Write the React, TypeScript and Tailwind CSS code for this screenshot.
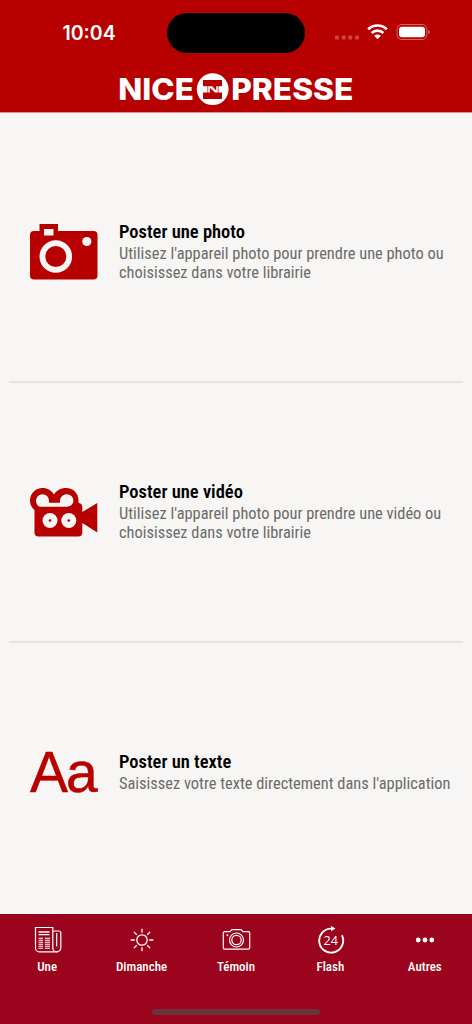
import type { ReactNode } from 'react'

interface PostOption {
  id: string
  title: string
  lines: string[]
  icon: ReactNode
}

interface Tab {
  label: string
  icon: ReactNode
}

const CameraIcon = () => (
  <svg width="68" height="56" viewBox="0 0 68 56" fill="none">
    <path
      fill="#b70000"
      fillRule="evenodd"
      d="M4 7H9.5V0H28V7H63.5a4 4 0 0 1 4 4V51.5a4 4 0 0 1-4 4H4a4 4 0 0 1-4-4V11a4 4 0 0 1 4-4ZM14 5V11.5H23.5V5Z"
    />
    <circle cx="25.8" cy="32.5" r="13.4" stroke="#f7f6f4" strokeWidth="5.8" />
    <circle cx="56.8" cy="17.5" r="4.6" fill="#f7f6f4" />
  </svg>
)

const MovieIcon = () => (
  <svg width="68" height="49" viewBox="0 0 68 49">
    <path
      fill="#b70000"
      d="M12.5 0C17.5 0 21.5 2.5 24 6.5C26.5 2.5 30.5 0 36 0C43.5 0 48.5 5.5 48.5 12.5V15C50.5 15 52.3 16.5 52.3 19V24L67.3 15V44.5L52.3 35V44.5a4 4 0 0 1-4 4H8.5a4 4 0 0 1-4-4V22C1.5 19.5 0 16.5 0 12.5C0 5.5 5.5 0 12.5 0Z"
    />
    <path
      fill="#f7f6f4"
      d="M12.5 6.2A6.5 6.5 0 0 0 6 12.6C6 15.5 7.3 17.6 9.6 18.8H37C41 18.5 43.4 16 43.4 12.6A6.5 6.5 0 0 0 36.8 6.2A6.5 6.5 0 0 0 30 12.6V14.8H19V12.6A6.5 6.5 0 0 0 12.5 6.2Z"
    />
    <circle cx="20" cy="32.5" r="7.5" fill="#f7f6f4" />
    <circle cx="38.8" cy="32.5" r="7.5" fill="#f7f6f4" />
    <circle cx="20" cy="32.5" r="1.3" fill="#b70000" />
    <circle cx="38.8" cy="32.5" r="1.3" fill="#b70000" />
  </svg>
)

const NewspaperIcon = () => (
  <svg className="ml-px" width="28" height="28" viewBox="0 0 28 28" fill="none" stroke="#fff" strokeWidth="1.2">
    <path d="M18.8 22.5V1.5H1.5V22a3.8 3.8 0 0 0 3.8 3.8H23a3.8 3.8 0 0 0 3.8-3.8V7a2 2 0 0 0-2-2H20.5a1.7 1.7 0 0 0-1.7 1.7" />
    <path d="M18.8 22a3.8 3.8 0 0 0 3.8 3.8M22.7 7V20.5" />
    <path d="M4.5 6H15.5M4.5 8.6H15.5" strokeWidth="1.3" />
    <path
      d="M4.5 12.2H9M4.5 14.2H9M4.5 16.2H9M4.5 18.2H9M4.5 20.2H9M4.5 22.2H9M10.8 12.2H16M10.8 14.2H16M10.8 16.2H16M10.8 18.2H16M10.8 20.2H16M10.8 22.2H16"
      strokeWidth="1.1"
    />
  </svg>
)

const SunIcon = () => (
  <svg className="ml-px" width="24" height="24" viewBox="0 0 24 24" fill="none" stroke="#fff" strokeWidth="1.3">
    <circle cx="12" cy="12" r="5.2" />
    <path d="M12 .7V4.8M12 19.2V23.3M.7 12H4.8M19.2 12H23.3M3.9 3.9L6.8 6.8M17.2 17.2L20.1 20.1M3.9 20.1L6.8 17.2M17.2 6.8L20.1 3.9" />
  </svg>
)

const PhotoTabIcon = () => (
  <svg width="30" height="24" viewBox="0 0 30 24" fill="none" stroke="#fff" strokeWidth="1.2">
    <path d="M3.5 3.7H9L11 1.7H20L22 3.7H27.5a1.2 1.2 0 0 1 1.2 1.2V20a1.2 1.2 0 0 1-1.2 1.2H3.5A1.2 1.2 0 0 1 2.3 20V4.9A1.2 1.2 0 0 1 3.5 3.7Z" />
    <circle cx="15.5" cy="12" r="7" />
    <circle cx="15.5" cy="12" r="4.7" />
    <circle cx="6.4" cy="7.3" r="1" fill="#fff" stroke="none" />
  </svg>
)

const FlashIcon = () => (
  <svg className="ml-[2px]" width="28" height="28" viewBox="0 0 28 28" fill="none">
    <path d="M15.5 2.6H14A12 12 0 1 0 24.9 9.2" stroke="#fff" strokeWidth="1.9" />
    <path d="M14 0L18.5 2.6L14 5.3Z" fill="#fff" />
    <text
      className="[font-stretch:100%]"
      x="13.8"
      y="18.9"
      textAnchor="middle"
      fill="#fff"
      fontSize="12.6"
      fontFamily="Open Sans, sans-serif"
    >
      24
    </text>
  </svg>
)

const DotsIcon = () => (
  <svg width="20" height="6" viewBox="0 0 20 6" fill="#fff">
    <circle cx="3.2" cy="3" r="2.4" />
    <circle cx="10" cy="3" r="2.4" />
    <circle cx="16.8" cy="3" r="2.4" />
  </svg>
)

const options: PostOption[] = [
  {
    id: 'photo',
    title: 'Poster une photo',
    lines: ["Utilisez l'appareil photo pour prendre une photo ou", 'choisissez dans votre librairie'],
    icon: <CameraIcon />,
  },
  {
    id: 'video',
    title: 'Poster une vidéo',
    lines: ["Utilisez l'appareil photo pour prendre une vidéo ou", 'choisissez dans votre librairie'],
    icon: <MovieIcon />,
  },
  {
    id: 'text',
    title: 'Poster un texte',
    lines: ["Saisissez votre texte directement dans l'application"],
    icon: (
      <span className="whitespace-nowrap font-['Liberation_Sans',sans-serif] text-[57px] leading-none tracking-[-2px] text-[#b70000] [-webkit-text-stroke:0.5px_#b70000]">
        Aa
      </span>
    ),
  },
]

const tabs: Tab[] = [
  { label: 'Une', icon: <NewspaperIcon /> },
  { label: 'Dimanche', icon: <SunIcon /> },
  { label: 'Témoin', icon: <PhotoTabIcon /> },
  { label: 'Flash', icon: <FlashIcon /> },
  { label: 'Autres', icon: <DotsIcon /> },
]

const StatusBar = () => (
  <div className="flex h-[66px] items-center text-white">
    <span className="w-[167px] pt-[2px] pl-[62.5px] font-['Inter',sans-serif] text-[19.5px] font-semibold leading-none">
      10:04
    </span>
    <div className="h-[40px] w-[138px] rounded-full bg-black" />
    <svg className="ml-[29px]" width="98" height="20" viewBox="0 0 98 20" fill="none">
      <g fill="#fff" fillOpacity=".27">
        <rect x="1" y="12.5" width="4" height="4" rx="1" />
        <rect x="7.7" y="12.5" width="4" height="4" rx="1" />
        <rect x="14.3" y="12.5" width="4" height="4" rx="1" />
        <rect x="21" y="12.5" width="4" height="4" rx="1" />
      </g>
      <g stroke="#fff" strokeWidth="2.7">
        <path d="M34.2 6.2A13.5 13.5 0 0 1 52.8 6.2" />
        <path d="M37.7 10A8.3 8.3 0 0 1 49.3 10" />
      </g>
      <path d="M40.2 12.8A4.7 4.7 0 0 1 46.8 12.8L43.5 16.2Z" fill="#fff" />
      <rect x="63.1" y="1.5" width="29.7" height="15" rx="4.8" stroke="#fff" strokeOpacity=".4" />
      <rect x="65" y="3.7" width="26" height="10.6" rx="3" fill="#fff" />
      <path d="M94.2 6.7a2.5 2.5 0 0 1 0 4.6Z" fill="#fff" fillOpacity=".45" />
    </svg>
  </div>
)

const Logo = () => (
  <svg className="ml-[118px]" width="236" height="36" viewBox="0 0 236 36" fill="#fff">
    <g className="[font-stretch:100%]" fontFamily="Inter, sans-serif" fontSize="30" fontWeight="800">
      <text x="0.3" y="28.4" textLength="75.5" lengthAdjust="spacingAndGlyphs">NICE</text>
      <text x="113.2" y="28.4" textLength="122.2" lengthAdjust="spacingAndGlyphs">PRESSE</text>
    </g>
    <circle cx="94.7" cy="17.2" r="15.9" />
    {/* red frame, then the white band with the N strokes in it */}
    <g fill="#b70000">
      <path d="M85 8H104V14.2H85Z" />
      <path d="M85 20.5H104V27H85Z" />
      <path d="M89.5 13H100.5V21.5H89.5Z" />
    </g>
    <path d="M90.2 14.2H94.3L98.2 18.6V14.2H99.8V20.5H97L91.8 15.8V20.5H90.2Z" />
  </svg>
)

export default function App() {
  return (
    <div className="flex h-[1024px] w-[472px] flex-col overflow-hidden bg-[#f7f6f4] font-['Roboto_Condensed','Roboto',sans-serif] [font-stretch:75%]">
      <header className="h-[113px] border-b border-[#dc9392] bg-[#b70000]">
        <StatusBar />
        <div className="pt-[6px]">
          <Logo />
        </div>
      </header>

      <main className="flex flex-1 flex-col px-[9px] pt-[10px]">
        {options.map(option => (
          <section
            key={option.id}
            className="flex h-[260px] items-center border-b-2 border-[#e5e4e3] pl-[21px] last:border-transparent"
          >
            <div className="w-[68px] shrink-0">{option.icon}</div>
            <div className="ml-[21px] whitespace-nowrap">
              <h2 className="mb-[2px] text-[18.5px] font-semibold leading-[20px] text-black">{option.title}</h2>
              {option.lines.map(line => (
                <p key={line} className="text-[16.4px] leading-[19px] text-[#6b6b6a]">
                  {line}
                </p>
              ))}
            </div>
          </section>
        ))}
      </main>

      <footer className="flex h-[110px] flex-col items-center bg-[#9a041c]">
        <nav className="grid w-full grid-cols-5 pt-[11px] text-white">
          {tabs.map(tab => (
            <div key={tab.label} className="flex flex-col items-center">
              <div className="flex h-[30px] items-center">{tab.icon}</div>
              <span className="mt-[4px] text-[13px] font-medium leading-[16px]">{tab.label}</span>
            </div>
          ))}
        </nav>
        <div className="mt-[34px] h-[6px] w-[168px] rounded-full bg-[#6c323b]" />
      </footer>
    </div>
  )
}
